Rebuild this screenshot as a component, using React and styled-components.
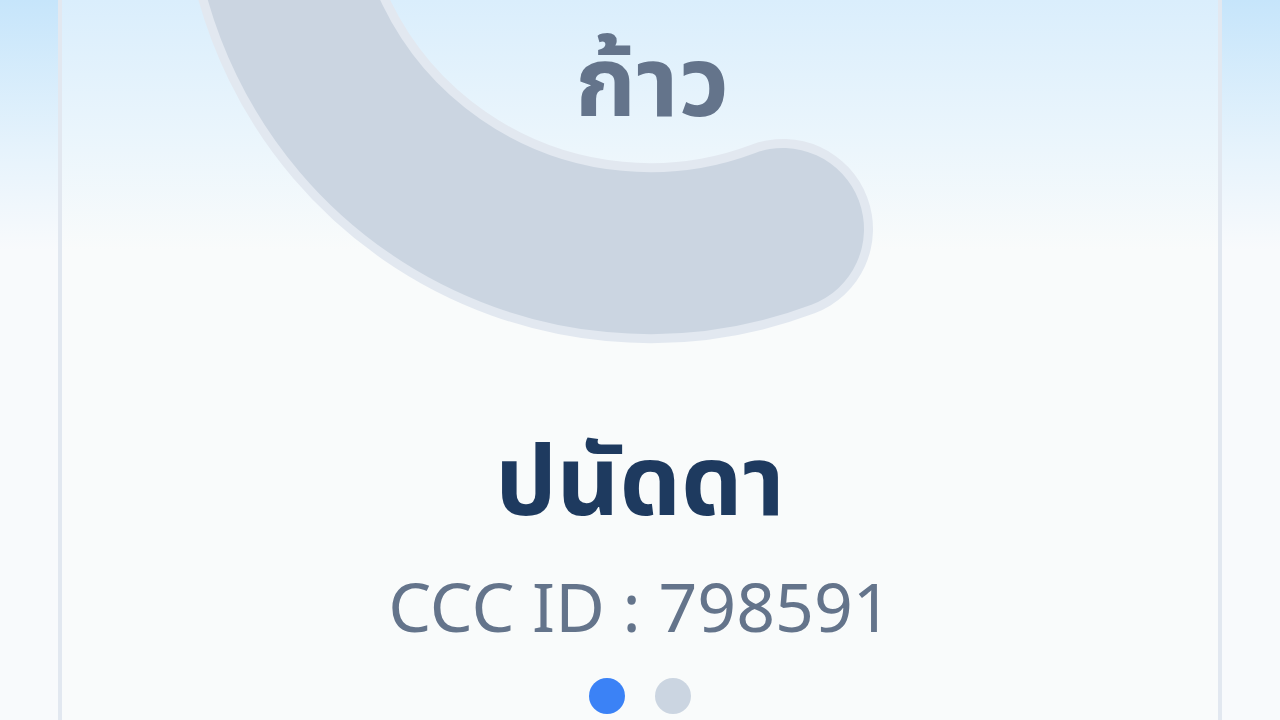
import React from "react";
import styled, { createGlobalStyle } from "styled-components";

const GlobalStyle = createGlobalStyle`
  html, body {
    margin: 0;
    padding: 0;
    height: 100%;
  }
  body {
    background: linear-gradient(to bottom, #c6e5fb 0px, #e6f3fc 150px, #f8fafc 250px, #f8fafc 100%);
    font-family: "Noto Sans Thai", "Noto Sans", sans-serif;
    overflow: hidden;
  }
`;

const Page = styled.div`
  height: 720px;
  display: flex;
  justify-content: center;
`;

const Card = styled.div`
  position: relative;
  width: 1156px;
  height: 720px;
  border-left: 4px solid #e2e8f0;
  border-right: 4px solid #e2e8f0;
  background: linear-gradient(to bottom, #daeefc 0px, #ecf6fc 150px, #f9fbfb 250px, #f9fbfb 100%);
  overflow: hidden;
  display: flex;
  flex-direction: column;
  align-items: center;
`;

const Hero = styled.div`
  position: relative;
  width: 100%;
  height: 400px;
  display: flex;
  justify-content: center;
`;

const Swoosh = styled.svg`
  position: absolute;
  left: 0;
  top: 0;
  width: 100%;
  height: 100%;
`;

const Title = styled.div`
  position: relative;
  margin-top: 28px;
  padding-left: 24px;
  font-size: 98px;
  font-weight: 700;
  line-height: 1.2;
  color: #64748b;
`;

const Name = styled.div`
  margin-top: 28px;
  font-size: 97px;
  font-weight: 700;
  line-height: 1.2;
  color: #1e3a5f;
`;

const CccId = styled.div`
  margin-top: 21px;
  font-family: "Noto Sans", "Open Sans", sans-serif;
  font-size: 68px;
  line-height: 1.2;
  color: #64748b;
`;

const Dots = styled.div`
  display: flex;
  gap: 30px;
  margin-top: 31px;
`;

const Dot = styled.span`
  width: 36px;
  height: 36px;
  border-radius: 50%;
  background: ${(p) => (p.active ? "#3b82f6" : "#cbd5e1")};
`;

const ARC = "M 271.5 -125.5 A 378.5 378.5 0 0 0 783 229";

export default function App() {
  return (
    <>
      <GlobalStyle />
      <Page>
        <Card>
          <Hero>
            <Swoosh viewBox="62 0 1156 400" preserveAspectRatio="none">
              <path d={ARC} fill="none" stroke="#e2e8f0" strokeWidth="180" strokeLinecap="round" />
              <path d={ARC} fill="none" stroke="#cbd5e1" strokeWidth="162" strokeLinecap="round" />
            </Swoosh>
            <Title>ก้าว</Title>
          </Hero>
          <Name>ปนัดดา</Name>
          <CccId>CCC ID : 798591</CccId>
          <Dots>
            <Dot active />
            <Dot />
          </Dots>
        </Card>
      </Page>
    </>
  );
}
